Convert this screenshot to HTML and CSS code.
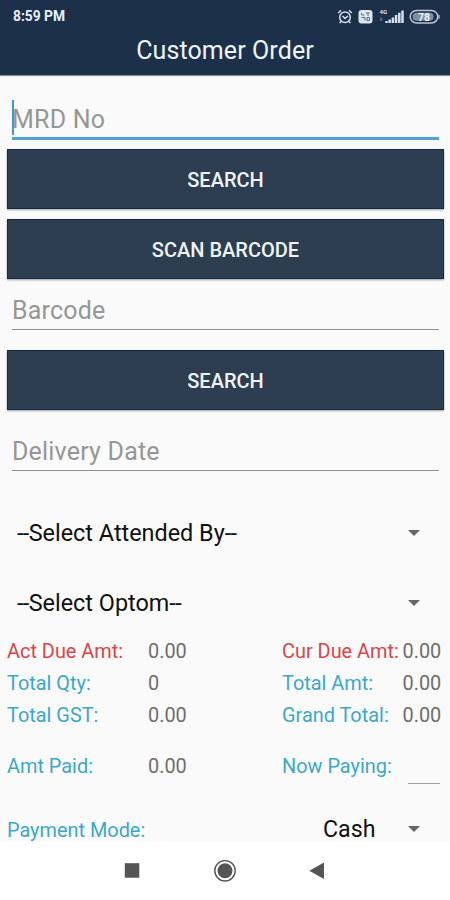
FILE: index.html
```
<!DOCTYPE html>
<html lang="en">
<head>
  <meta charset="UTF-8">
  <meta name="viewport" content="width=device-width, initial-scale=1.0">
  <title>Customer Order</title>
  <link rel="stylesheet" href="styles.css">
</head>
<body>
  <header>
    <div class="status-bar">
      <span class="clock">8:59 PM</span>
      <svg class="status-icons" width="104" height="18" viewBox="0 0 104 18">
        <!-- Alarm -->
        <g fill="none" stroke="#d5e0ec" stroke-width="1.5">
          <circle cx="8" cy="9.3" r="5.3"/>
          <path d="M1.2 5 L4 2.4 M14.8 5 L12 2.4 M5.5 8 L8 10.4 L11 8 M4 13.5 L2.6 15 M12 13.5 L13.4 15"/>
        </g>
        <!-- VoLTE -->
        <rect x="21.5" y="2" width="14" height="13.5" rx="3" fill="#dce6f0"/>
        <path d="M24.5 5 V7 H27.5 M29 5 H32.5 M31 5 V8 M24.5 9.5 H28 V12.5 M30 9.5 H32.5 V12.5 H30 Z" fill="none" stroke="#5b6d83" stroke-width="1"/>
        <!-- Signal -->
        <text x="42.5" y="6" class="net">4G</text>
        <path d="M44 9 V13 M43 11 L44 13 L45.3 10.5" fill="none" stroke="#62758c" stroke-width="1"/>
        <path d="M49.5 15 V13 M52.7 15 V11.5 M55.9 15 V9.5 M59.1 15 V7 M62.3 15 V4.7 M65.5 15 V2.5" fill="none" stroke="#d5e0ec" stroke-width="2.5"/>
        <!-- Battery -->
        <rect x="73.2" y="2.4" width="27.6" height="12.6" rx="6.3" fill="none" stroke="#b9c7d6" stroke-width="1.5"/>
        <rect x="75.5" y="4.7" width="21" height="8" rx="4" fill="#7d8fa4"/>
        <path d="M102 6.7 V10.7" stroke="#b9c7d6" stroke-width="1.2"/>
        <text x="87" y="12.5" class="level">78</text>
      </svg>
    </div>
    <h1>Customer Order</h1>
  </header>

  <main>
    <div class="field focused"><span class="caret"></span>MRD No</div>
    <button class="search-mrd">SEARCH</button>
    <button class="scan">SCAN BARCODE</button>
    <div class="field barcode">Barcode</div>
    <button class="search-barcode">SEARCH</button>
    <div class="field delivery">Delivery Date</div>

    <div class="select attended"><span><span class="dash">--</span>Select Attended By<span class="dash">--</span></span><i class="arrow"></i></div>
    <div class="select"><span><span class="dash">--</span>Select Optom<span class="dash">--</span></span><i class="arrow"></i></div>

    <!-- Amounts -->
    <div class="totals">
      <span class="due">Act Due Amt:</span><b>0.00</b>
      <span class="due">Cur Due Amt:</span><b>0.00</b>
      <span>Total Qty:</span><b>0</b>
      <span>Total Amt:</span><b>0.00</b>
      <span>Total GST:</span><b>0.00</b>
      <span>Grand Total:</span><b>0.00</b>
    </div>
    <div class="totals paid">
      <span>Amt Paid:</span><b>0.00</b>
      <span>Now Paying:</span><b class="paying"></b>
    </div>
    <div class="payment">
      <span class="mode">Payment Mode:</span>
      <span class="cash">Cash</span>
      <i class="arrow"></i>
    </div>
  </main>

  <nav>
    <svg width="24" height="24" viewBox="0 0 24 24"><rect x="3.8" y="4.2" width="14.5" height="14.5" fill="#555"/></svg>
    <svg width="24" height="24" viewBox="0 0 24 24"><circle cx="12" cy="11.8" r="10.2" fill="none" stroke="#555" stroke-width="1.4"/><circle cx="12" cy="11.8" r="7.5" fill="#555"/></svg>
    <svg width="24" height="24" viewBox="0 0 24 24"><path d="M4.3 11.8 L19 3.5 V20 Z" fill="#555"/></svg>
  </nav>
</body>
</html>
```
FILE: styles.css
```
* {
  box-sizing: border-box;
}
body {
  margin: 0;
  width: 450px;
  height: 900px;
  overflow: hidden;
  background-color: #fafafa;
  font-family: Roboto, sans-serif;
}
header {
  height: 75px;
  background-color: #1c3049;
  box-shadow: 0 1px 1px #8a939d;
}
.status-bar {
  display: flex;
  justify-content: space-between;
  align-items: center;
  height: 33px;
  padding: 0 9.5px 0 13px;
}
.clock {
  color: #e9f0f8;
  font-size: 13.8px;
  font-weight: 700;
  line-height: 33px;
}
.net {
  fill: #d5e0ec;
  font-size: 6px;
  font-weight: 700;
}
.level {
  fill: #f2f6fa;
  font-size: 10.5px;
  font-weight: 700;
  text-anchor: middle;
}
h1 {
  margin: 0;
  color: #eef4fa;
  font-size: 25px;
  font-weight: 400;
  line-height: 36px;
  letter-spacing: 0.1px;
  text-align: center;
}
main {
  height: 767px;
  overflow: hidden;
  padding: 23px 7px 0;
}
.field {
  display: flex;
  align-items: center;
  height: 42px;
  margin: 0 4px 0 5px;
  padding-top: 4px;
  border-bottom: 1px solid #8c8c8c;
  color: #969696;
  font-size: 25px;
  letter-spacing: 0.2px;
}
.field.focused {
  position: relative;
  border-bottom: 3px solid #4fa3cc;
}
.caret {
  position: absolute;
  left: 0;
  top: 2px;
  width: 2px;
  height: 35px;
  background-color: #3d9bcb;
}
button {
  display: block;
  width: 437px;
  height: 60px;
  padding: 0;
  border: 1px solid #172a43;
  background-color: #2c3e50;
  box-shadow: 0 1px 2px #9aa0a6;
  color: #eef4fa;
  font-family: inherit;
  font-size: 20px;
  font-weight: 500;
  line-height: 60px;
}
.search-mrd {
  margin-top: 9px;
}
.scan {
  margin-top: 10px;
}
.barcode {
  margin-top: 9px;
}
.search-barcode {
  margin-top: 20px;
}
.delivery {
  margin-top: 19px;
}
.select {
  display: flex;
  justify-content: space-between;
  align-items: center;
  height: 70px;
  padding: 0 23px 0 10px;
  color: #111;
  font-size: 23.4px;
}
.attended {
  margin-top: 27px;
}
.dash {
  letter-spacing: -0.6px;
}
.arrow {
  border: 6px solid transparent;
  border-top-color: #666;
  border-bottom: 0;
}
.totals {
  display: grid;
  grid-template-columns: 141px 134px 120.5px 38px;
  grid-auto-rows: 32px;
  align-items: center;
  margin-top: -3px;
  color: #3aa8cb;
  font-size: 19.9px;
  white-space: nowrap;
}
.totals b {
  color: #6e6e6e;
  font-weight: 400;
}
.totals .due {
  color: #dc4448;
}
.totals.paid {
  margin-top: 19px;
}
.totals .paying {
  width: 32px;
  height: 34px;
  margin-left: 5px;
  border-bottom: 1px solid #a0a0a0;
  align-self: start;
}
.payment {
  display: flex;
  align-items: center;
  height: 40px;
  margin-top: 27px;
  padding-right: 23px;
}
.mode {
  width: 316px;
  padding-top: 2px;
  color: #3aa8cb;
  font-size: 19.9px;
}
.cash {
  flex: 1;
  color: #111;
  font-size: 23.2px;
  line-height: 22px;
}
nav {
  display: flex;
  justify-content: center;
  gap: 68px;
  height: 58px;
  padding-top: 17px;
  background-color: #fff;
}
```
